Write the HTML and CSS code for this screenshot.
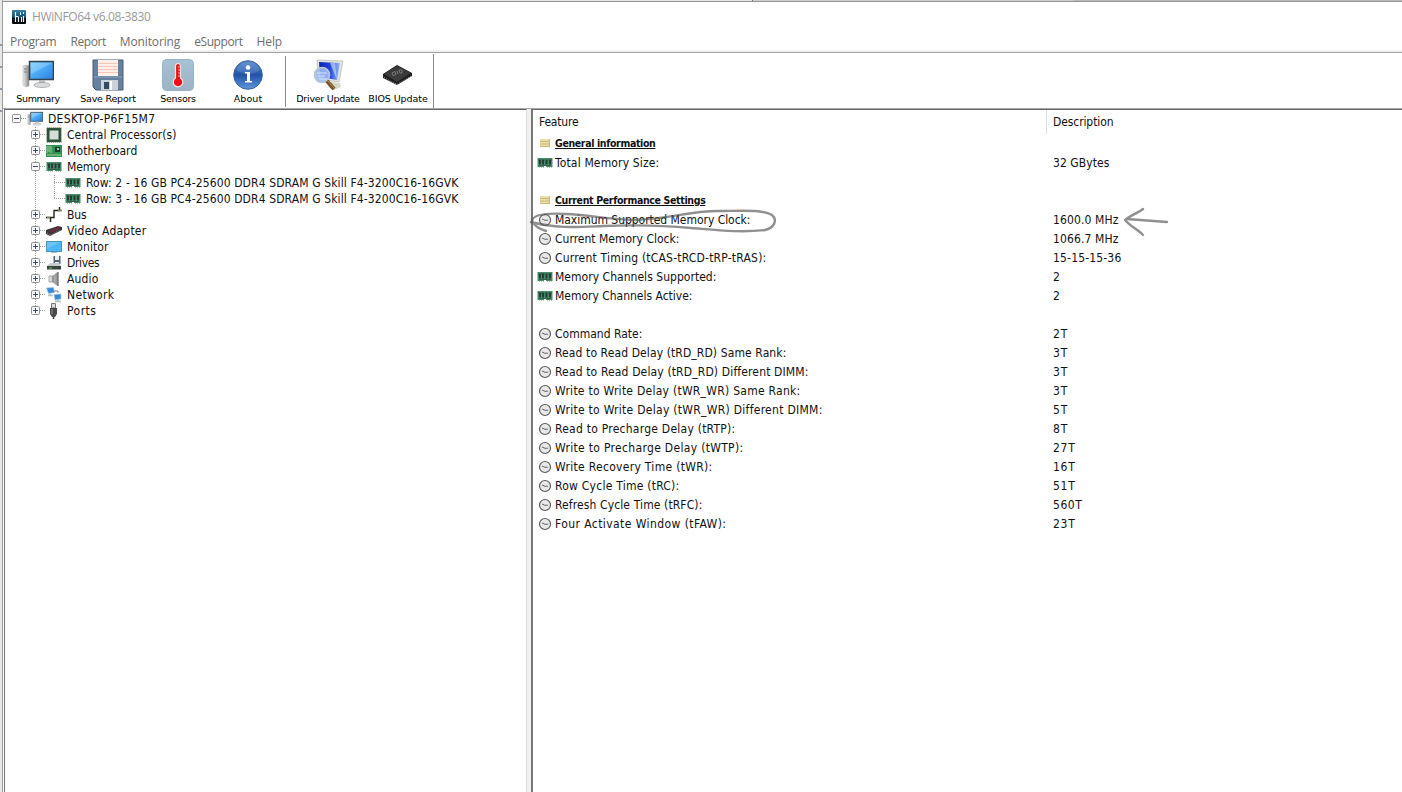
FILE: index.html
```html
<!DOCTYPE html>
<html lang="en">
<head>
<meta charset="utf-8">
<title>HWiNFO64 v6.08-3830</title>
<link rel="stylesheet" href="styles.css">
</head>
<body>
<svg class="defs" aria-hidden="true">
  <defs>
    <linearGradient id="screen" x1="0" y1="0" x2="1" y2="1"><stop offset="0" stop-color="#85d0ff"/><stop offset=".5" stop-color="#49a8f5"/><stop offset="1" stop-color="#2b7cdb"/></linearGradient>
    <linearGradient id="navy" x1="0" y1="0" x2="1" y2="0"><stop offset="0" stop-color="#0c22ae"/><stop offset=".5" stop-color="#1c43d8"/><stop offset="1" stop-color="#9cbcff"/></linearGradient>
    <linearGradient id="ball" x1="0" y1="0" x2="0" y2="1"><stop offset="0" stop-color="#5d8ccc"/><stop offset=".5" stop-color="#2153a8"/><stop offset="1" stop-color="#5c98dc"/></linearGradient>
    <linearGradient id="grey" x1="0" y1="0" x2="1" y2="0"><stop offset="0" stop-color="#eee"/><stop offset="1" stop-color="#888"/></linearGradient>
    <linearGradient id="tile" x1="0" y1="0" x2="0" y2="1"><stop offset="0" stop-color="#a6c1d6"/><stop offset="1" stop-color="#9eb2c3"/></linearGradient>
    <linearGradient id="logo" x1="0" y1="0" x2="0" y2="1"><stop offset="0" stop-color="#3b7fa3"/><stop offset=".5" stop-color="#155073"/><stop offset=".6" stop-color="#05080c"/></linearGradient>
  </defs>
  <symbol id="ram" viewBox="0 0 16 12"><path d="M.5 1h15v9H9V9H7v1H.5z" fill="#468d6a"/><path d="M2 2.500h2v5H2zM5 2.500h2v5H5zM8.500 2.500h2v5h-2zM12 2.500h2v5h-2z" fill="#263d35"/><path d="M1 3h1M4 3h1M7 3h1M11 3h1M14 3h1M2 8.500h12" stroke="#335f4b"/><path d="M2 10.500h5M10 10.500h5" stroke="#c5c7b0" stroke-dasharray="1 1"/></symbol>
  <symbol id="clock" viewBox="0 0 14 14"><circle cx="7" cy="7" r="5.500" fill="#e9e9e9" stroke="#5c5c5c" stroke-width="1.200"/><path d="M4 6l3 1.300 3-.1" fill="none" stroke="#666"/></symbol>
  <symbol id="note" viewBox="0 0 10 10"><path d="M0 1h9v7.500H0z" fill="#eadfaa"/><path d="M0 3.500h9M0 6h9M0 8.500h9.500" stroke="#cdb874"/><path d="M9.500 1v8" stroke="#c8b986"/></symbol>
  <symbol id="plus" viewBox="0 0 9 9"><rect x=".5" y=".5" width="8" height="8" rx="1" fill="#f7f7f7" stroke="#919191"/><path d="M2 4.500h5M4.500 2v5" stroke="#3d4b7c"/></symbol>
  <symbol id="minus" viewBox="0 0 9 9"><rect x=".5" y=".5" width="8" height="8" rx="1" fill="#f7f7f7" stroke="#919191"/><path d="M2 4.500h5" stroke="#3d4b7c"/></symbol>
  <symbol id="pc" viewBox="0 0 32 32"><path d="M1 7l4-1 2 1v20l-3 1-3-2z" fill="url(#grey)" stroke="#aaa" stroke-width=".5"/><path d="M2 10h3M2 13h3" stroke="#777"/><rect x="7.500" y="2.500" width="24" height="18" fill="url(#screen)" stroke="#34404a" stroke-width="1.500"/><path d="M9 4h21L9 15z" fill="#b7e4ff" opacity=".35"/><path d="M17 21h6v4h-6z" fill="#bbb"/><ellipse cx="20" cy="26" rx="8" ry="2.500" fill="#d9dcdf" stroke="#999" stroke-width=".7"/></symbol>
</svg>

<div class="desktop">
  <div class="strip"><i></i><i></i><i></i><i></i></div>
  <main class="window">
    <div class="backdrop"><i></i><i></i><i></i></div>
    <header class="titlebar">
      <svg class="logo" viewBox="0 0 14 14"><rect width="14" height="14" rx="1" fill="url(#logo)"/><path d="M3.500 2v10M6.500 7v5M9.500 7v5M11.500 6v6M3.500 6.500h3" stroke="#e5f2f8" stroke-width="1.200"/><path d="M8.500 2v3M11.500 2v2" stroke="#d6edf7"/></svg>
      <span data-w="118">HWiNFO64 v6.08-3830</span>
    </header>
    <nav class="menu"><span data-w="46">Program</span><span data-w="35">Report</span><span data-w="60">Monitoring</span><span data-w="48">eSupport</span><span data-w="25">Help</span></nav>
    <div class="toolbar">
      <div class="group">
        <div class="tool"><svg viewBox="0 0 32 32"><use href="#pc"/></svg><span data-w="43">Summary</span></div>
        <div class="tool"><svg viewBox="0 0 32 32"><path d="M1 1h30v30H4l-3-3z" fill="#6681a0" stroke="#4a5c70"/><path d="M6 1h20v16H6z" fill="#fff0e9"/><path d="M6 4.500h20M6 7.500h20M6 10.500h20M6 13.500h20" stroke="#f3c6b8"/><path d="M2 18h28" stroke="#89a4bb"/><path d="M9 21h17v10H9z" fill="#ccd2d7"/><path d="M12 23h5v7h-5z" fill="#34495f"/><path d="M18 22h2v9h-2z" fill="#fff"/></svg><span data-w="55">Save Report</span></div>
        <div class="tool"><svg viewBox="0 0 32 32"><rect x=".5" y=".5" width="31" height="31" rx="4" fill="url(#tile)" stroke="#98b4ca"/><path d="M13.500 7a2.500 2.500 0 0 1 5 0v12a4.800 4.800 0 1 1-5 0z" fill="#ed1117" stroke="#f5e4e6" stroke-width="1.200"/><path d="M16 8h2M16 11h2M16 14h2M16 17h2" stroke="#ffe1df" stroke-width=".7"/></svg><span data-w="35">Sensors</span></div>
        <div class="tool"><svg viewBox="0 0 32 32"><circle cx="16" cy="16" r="14.300" fill="url(#ball)" stroke="#3d649f"/><path d="M4 11C7 1 25 1 28 11c-7 5-17 5-24 0" fill="#8aafdf" opacity=".25"/><circle cx="16" cy="8.500" r="2.300" fill="#fff"/><path d="M13 13h5v9h2v1.500h-7V22h2v-7.500h-2z" fill="#fff"/></svg><span data-w="28">About</span></div>
      </div>
      <div class="group last">
        <div class="tool"><svg viewBox="0 0 32 32"><path d="M5 1l26 1-4 21L6 20z" fill="#e3e5df" stroke="#aaa" stroke-width=".6"/><path d="M7 3l21 1-3 17L8 18z" fill="url(#navy)"/><path d="M18 4l5 0 2 17z" fill="#dceaff" opacity=".55"/><path d="M19 23l9 1 1 4-7 3-6-3z" fill="#d8d8ca"/><circle cx="10" cy="16" r="7.500" fill="#9dbdf3" fill-opacity=".9" stroke="#bac5ce" stroke-width="1.700"/><path d="M5 14h10M6 17h7M7 20h8" stroke="#d5e3ff"/><path d="M15 22l7 8" stroke="#73502b" stroke-width="4"/><path d="M15 21l7 8" stroke="#b9935f"/></svg><span data-w="63">Driver Update</span></div>
        <div class="tool"><svg viewBox="0 0 32 32"><path d="M1 15L15 6l15 8v3l-15 9L1 19z" fill="#1d1d1d"/><path d="M2 15L15 7l14 7-14 9z" fill="#3b3b3b"/><path d="M2 18.500l13 7 15-9" fill="none" stroke="#aaa" stroke-dasharray="1 1.500"/><path d="M10 14l3-1.500 1 3-3 1zM15 12l1 3M17 11l3 0 0 3-2 0z" fill="none" stroke="#777"/></svg><span data-w="59">BIOS Update</span></div>
      </div>
    </div>
    <div class="panes">
      <section class="tree">
        <div class="node root"><svg class="box"><use href="#minus"/></svg><i></i><svg class="ico"><use href="#pc"/></svg><span data-w="107">DESKTOP-P6F15M7</span></div>
        <div class="branch">
          <div class="node"><svg class="box"><use href="#plus"/></svg><i></i><svg class="ico" viewBox="0 0 16 16"><rect x=".8" y=".8" width="14.400" height="14.400" fill="#28503b" stroke="#7d9362" stroke-dasharray="1 1"/><rect x="1.500" y="1.500" width="13" height="13" fill="#28503b"/><rect x="3.500" y="3.500" width="9" height="9" fill="#d6ddd8"/></svg><span data-w="109">Central Processor(s)</span></div>
          <div class="node"><svg class="box"><use href="#plus"/></svg><i></i><svg class="ico" viewBox="0 0 16 16"><path d="M0 2h16v12H0z" fill="#329251"/><path d="M1 3v7M3 3v6M5 3v7M1 12h7M8 12h7" stroke="#a7cf9d"/><path d="M9 4h5v5H9z" fill="#163d2b"/><path d="M11 5h2v2h-2z" fill="#bac5c0"/></svg><span data-w="70">Motherboard</span></div>
          <div class="node"><svg class="box"><use href="#minus"/></svg><i></i><svg class="ico"><use href="#ram"/></svg><span data-w="43">Memory</span></div>
          <div class="leaves">
            <div class="node leaf"><i></i><svg class="ico"><use href="#ram"/></svg><span data-w="372">Row: 2 - 16 GB PC4-25600 DDR4 SDRAM G Skill F4-3200C16-16GVK</span></div>
            <div class="node leaf"><i></i><svg class="ico"><use href="#ram"/></svg><span data-w="372">Row: 3 - 16 GB PC4-25600 DDR4 SDRAM G Skill F4-3200C16-16GVK</span></div>
          </div>
          <div class="node"><svg class="box"><use href="#plus"/></svg><i></i><svg class="ico" viewBox="0 0 16 16"><path d="M0 10.500h8v-7h7M4.500 10v5M13.500 4V0" fill="none" stroke="#22261d" stroke-width="1.400"/><path d="M1 10.500h3M12 3.500h4" stroke="#7d8b5f" stroke-width="1.400"/></svg><span data-w="19">Bus</span></div>
          <div class="node"><svg class="box"><use href="#plus"/></svg><i></i><svg class="ico" viewBox="0 0 16 16"><path d="M0 7l12-4 4 1v3L4 13l-4-2z" fill="#39343b"/><path d="M3 8l9-4 2 2-9 4z" fill="#682c3b"/><path d="M1 10l4 2 9-5" fill="none" stroke="#9b8c8e" stroke-dasharray="1 1"/></svg><span data-w="79">Video Adapter</span></div>
          <div class="node"><svg class="box"><use href="#plus"/></svg><i></i><svg class="ico" viewBox="0 0 16 16"><rect x=".5" y="2.500" width="15" height="10" fill="#4db6f6" stroke="#4994bb"/><path d="M1 3h13L1 10z" fill="#8bd0fb" opacity=".5"/><path d="M5 13.500h6" stroke="#a1bdcd"/></svg><span data-w="41">Monitor</span></div>
          <div class="node"><svg class="box"><use href="#plus"/></svg><i></i><svg class="ico" viewBox="0 0 16 16"><path d="M7.500 1h7v8h-7z" fill="#4e6272"/><path d="M9 1h4v4H9zM9 7h4v2H9z" fill="#eee"/><path d="M4 8h9l2 3H1z" fill="#c8cccc"/><path d="M1 11h14v3.500H1z" fill="#39423e"/><path d="M3 13h3" stroke="#57d55d"/></svg><span data-w="32">Drives</span></div>
          <div class="node"><svg class="box"><use href="#plus"/></svg><i></i><svg class="ico" viewBox="0 0 16 16"><path d="M3 5h4l5-4v14l-5-4H3z" fill="url(#grey)" stroke="#888" stroke-width=".7"/><path d="M7 5v6M12 1v14" stroke="#707070"/></svg><span data-w="31">Audio</span></div>
          <div class="node"><svg class="box"><use href="#plus"/></svg><i></i><svg class="ico" viewBox="0 0 16 16"><path d="M.5 1l7-.5 1 5-6 1zM8 7.500l7-.5v5l-6 1z" fill="#3589d6" stroke="#a0c7df" stroke-width=".7"/><path d="M4 7v2M12 13v2M8 4h4v2" fill="none" stroke="#888"/><path d="M2 8.500h5M9 14.500h6" stroke="#b5bec4" stroke-width="1.500"/></svg><span data-w="47">Network</span></div>
          <div class="node"><svg class="box"><use href="#plus"/></svg><i></i><svg class="ico" viewBox="0 0 16 16"><path d="M5.500.5h4V5h-4z" fill="#ddd" stroke="#777"/><path d="M4 5h7v6l-2 3H6l-2-3z" fill="#484b4c"/><path d="M6 6v5" stroke="#989898"/><path d="M7.500 13v3" stroke="#444" stroke-width="1.500"/></svg><span data-w="29">Ports</span></div>
        </div>
      </section>
      <section class="details">
        <div class="row head"><div><span data-w="39">Feature</span></div><div><span data-w="60">Description</span></div></div>
        <div class="row section"><div><svg><use href="#note"/></svg><span data-w="100">General information</span></div></div>
        <div class="row"><div><svg class="chip"><use href="#ram"/></svg><span data-w="104">Total Memory Size:</span></div><div><span data-w="56">32 GBytes</span></div></div>
        <div class="row"></div>
        <div class="row section"><div><svg><use href="#note"/></svg><span data-w="150">Current Performance Settings</span></div></div>
        <div class="row"><div><svg><use href="#clock"/></svg><span data-w="195">Maximum Supported Memory Clock:</span></div><div><span data-w="65">1600.0 MHz</span></div></div>
        <div class="row"><div><svg><use href="#clock"/></svg><span data-w="124">Current Memory Clock:</span></div><div><span data-w="65">1066.7 MHz</span></div></div>
        <div class="row"><div><svg><use href="#clock"/></svg><span data-w="211">Current Timing (tCAS-tRCD-tRP-tRAS):</span></div><div><span data-w="68">15-15-15-36</span></div></div>
        <div class="row"><div><svg class="chip"><use href="#ram"/></svg><span data-w="161">Memory Channels Supported:</span></div><div><span>2</span></div></div>
        <div class="row"><div><svg class="chip"><use href="#ram"/></svg><span data-w="137">Memory Channels Active:</span></div><div><span>2</span></div></div>
        <div class="row"></div>
        <div class="row"><div><svg><use href="#clock"/></svg><span data-w="87">Command Rate:</span></div><div><span data-w="15">2T</span></div></div>
        <div class="row"><div><svg><use href="#clock"/></svg><span data-w="231">Read to Read Delay (tRD_RD) Same Rank:</span></div><div><span data-w="15">3T</span></div></div>
        <div class="row"><div><svg><use href="#clock"/></svg><span data-w="253">Read to Read Delay (tRD_RD) Different DIMM:</span></div><div><span data-w="15">3T</span></div></div>
        <div class="row"><div><svg><use href="#clock"/></svg><span data-w="245">Write to Write Delay (tWR_WR) Same Rank:</span></div><div><span data-w="15">3T</span></div></div>
        <div class="row"><div><svg><use href="#clock"/></svg><span data-w="267">Write to Write Delay (tWR_WR) Different DIMM:</span></div><div><span data-w="15">5T</span></div></div>
        <div class="row"><div><svg><use href="#clock"/></svg><span data-w="180">Read to Precharge Delay (tRTP):</span></div><div><span data-w="15">8T</span></div></div>
        <div class="row"><div><svg><use href="#clock"/></svg><span data-w="188">Write to Precharge Delay (tWTP):</span></div><div><span data-w="22">27T</span></div></div>
        <div class="row"><div><svg><use href="#clock"/></svg><span data-w="157">Write Recovery Time (tWR):</span></div><div><span data-w="22">16T</span></div></div>
        <div class="row"><div><svg><use href="#clock"/></svg><span data-w="124">Row Cycle Time (tRC):</span></div><div><span data-w="22">51T</span></div></div>
        <div class="row"><div><svg><use href="#clock"/></svg><span data-w="147">Refresh Cycle Time (tRFC):</span></div><div><span data-w="29">560T</span></div></div>
        <div class="row"><div><svg><use href="#clock"/></svg><span data-w="171">Four Activate Window (tFAW):</span></div><div><span data-w="22">23T</span></div></div>
      </section>
    </div>
  </main>
</div>
<svg class="pen" viewBox="0 0 1402 792"><path d="M546 231C539 229 534 225 532 221C533 214 548 213 566 214C590 215 606 219 633 220C665 220 688 211 718 211C740 211 762 209 772 215C778 220 774 228 765 230C741 233 716 230 691 228C660 225 628 225 603 226C579 227 557 229 531 222"/><path d="M1143 209C1138 213 1129 216 1125 220C1130 226 1137 229 1143 235M1127 219L1167 222"/></svg>
<script src="main.js"></script>
</body>
</html>
```
FILE: styles.css
```css
* { box-sizing: border-box; }
body { margin: 0; overflow: hidden; background: #fff; color: #111; font: 12px/16px "DejaVu Sans Condensed", "DejaVu Sans", sans-serif; font-stretch: condensed; }
span { white-space: nowrap; }
svg { display: block; flex: none; }
.defs { position: absolute; width: 0; height: 0; }
.desktop { display: flex; width: 1402px; height: 792px; }
.strip { width: 3px; flex: none; padding-top: 44px; background: #e7e7e7; border-right: 1px solid #9c9c9c; }
.strip i { display: block; height: 2px; width: 2px; margin-bottom: 20px; background: #8f9aa2; }
.window { width: 1399px; display: flex; flex-direction: column; }
.backdrop { height: 2px; display: flex; border-bottom: 1px solid #969696; }
.backdrop i { width: 749px; background: #e5e5e5; }
.backdrop i:nth-child(2) { width: 321px; background: #ccc; border-left: 1px solid #777; }
.backdrop i:nth-child(3) { width: 329px; background: #bbb; }
.titlebar { height: 30px; display: flex; align-items: center; gap: 6px; padding-left: 9px; color: #999; font-family: "Open Sans", sans-serif; font-stretch: normal; }
.logo { width: 14px; height: 14px; }
.menu { height: 21px; display: flex; gap: 14px; padding: 2px 0 0 7px; color: #6d6d6d; font-family: "Open Sans", sans-serif; font-stretch: normal; border-bottom: 1px solid #a0a0a0; box-shadow: inset 0 -2px #f0f0f0; }
.toolbar { height: 55px; display: flex; }
.group { display: flex; height: 51px; margin-top: 3px; padding-right: 2px; border-right: 1px solid #8c8c8c; }
.group.last { height: 54px; margin-top: 1px; padding: 2px 0 0 7px; }
.tool { width: 70px; display: flex; flex-direction: column; align-items: center; padding-top: 3px; font: 9.500px/14px "DejaVu Sans", sans-serif; color: #000; }
.tool svg { width: 32px; height: 32px; margin: 0 0 1px; }
.panes { flex: 1; min-height: 0; display: flex; border-top: 1px solid #a8a8a8; }
.tree { width: 524px; margin-left: 1px; padding: 1px 0 0 7px; border-top: 1px solid #666; border-left: 1px solid #777; border-right: 1px solid #e0e0e0; }
.node { height: 16px; display: flex; align-items: center; }
.node .box { width: 9px; height: 9px; margin-top: -1px; }
.node i { width: 6px; height: 1px; margin-top: -1px; background: repeating-linear-gradient(90deg, #999 0 1px, transparent 1px 2px); }
.ico { width: 16px; height: 16px; margin-right: 5px; margin-top: -1px; }
.branch { padding-left: 19px; background: repeating-linear-gradient(#999 0 1px, transparent 1px 2px) 23px 0 / 1px 188px no-repeat; }
.leaves { padding-left: 23px; background: repeating-linear-gradient(#999 0 1px, transparent 1px 2px) 23px 0 / 1px 24px no-repeat; }
.leaf i { width: 11px; }
.details { width: 874px; margin-left: 4px; border-top: 1px solid #666; border-left: 2px solid #777; box-shadow: -4px 0 #f0f0f0; }
.row { height: 19px; display: grid; grid-template-columns: 514px 1fr; align-items: center; }
.row > div { display: flex; align-items: center; padding-left: 6.500px; }
.row > div:first-child { padding-left: 4px; }
.row svg { width: 14px; height: 14px; margin: 0 3.500px 0 1px; }
.row .chip { width: 16px; height: 12px; margin: 0 2.500px 0 0; }
.head { height: 24px; }
.head > div { height: 24px; }
.head > div:first-child { padding-left: 6.500px; border-right: 1px solid #e0e0e0; }
.section > div { height: 17px; margin-top: -2px; }
.section { font-size: 10.500px; font-weight: bold; }
.section span { text-decoration: underline; text-underline-offset: 1px; }
.section svg { width: 10px; height: 10px; margin: 0 5.500px 0 3px; }
.pen { position: absolute; left: 0; top: 0; width: 1402px; height: 792px; fill: none; stroke: #555; stroke-opacity: .65; stroke-width: 2.400; stroke-linecap: round; stroke-linejoin: round; pointer-events: none; }
```
FILE: main.js
```js
document.querySelectorAll("[data-w]").forEach(function (el) {
  var w = el.getBoundingClientRect().width;
  var n = el.textContent.length;
  var s = (Number(el.dataset.w) + 0.4 - w) / n;
  el.style.letterSpacing = s.toFixed(3) + "px";
});
```
